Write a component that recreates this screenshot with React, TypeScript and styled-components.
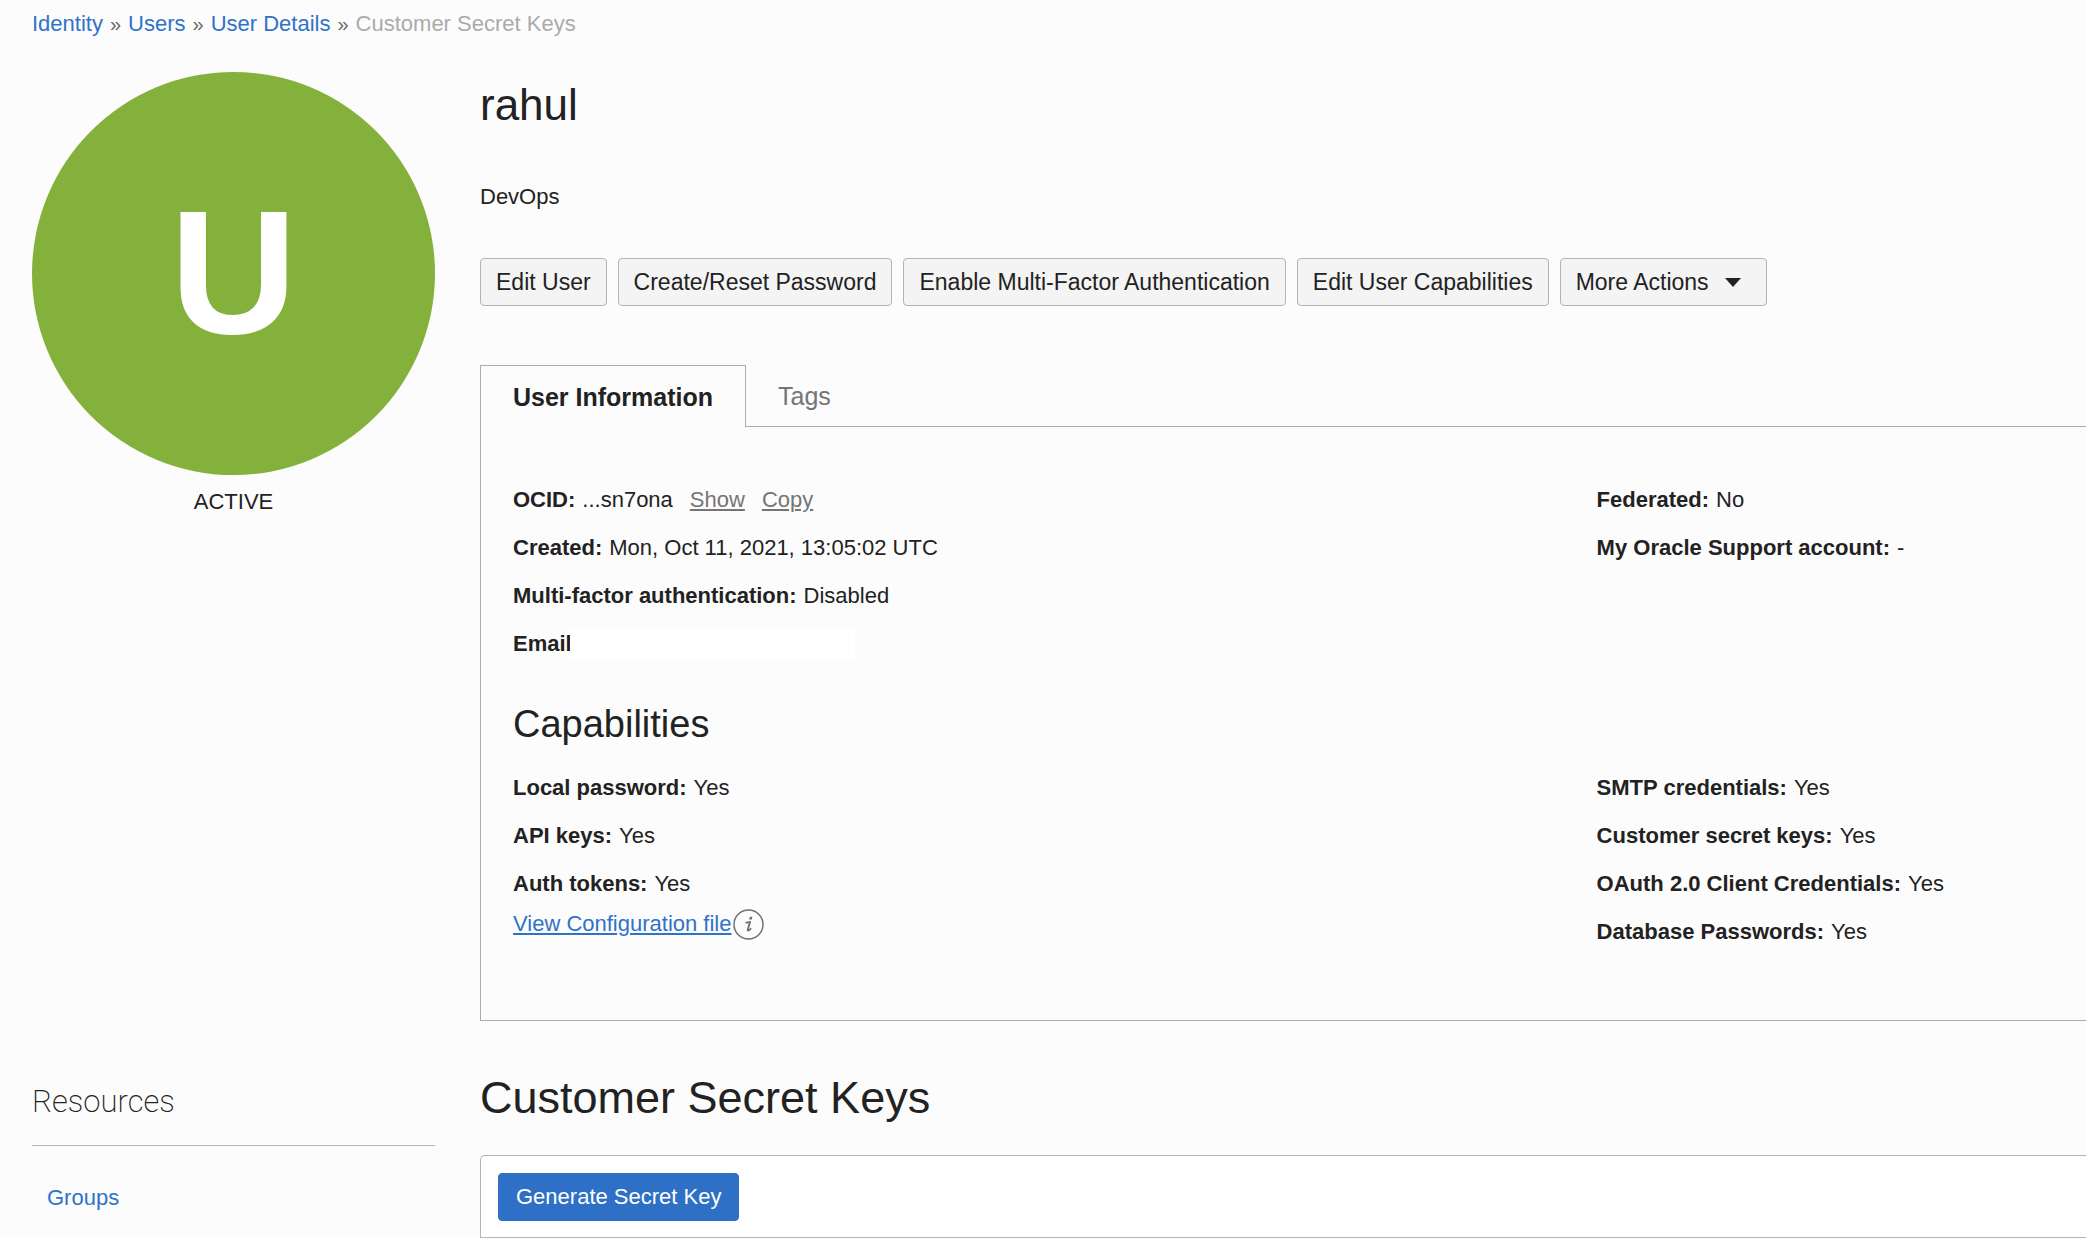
import React from 'react';
import styled, { createGlobalStyle } from 'styled-components';

const color = {
  page: '#fcfcfc',
  text: '#222222',
  muted: '#757575',
  faint: '#ababab',
  link: '#2f73c9',
  primary: '#2e70c6',
  avatar: '#84b03c',
  line: '#aaacae',
  controlLine: '#b1b4bb',
};

const GlobalStyle = createGlobalStyle`
  *, *::before, *::after { box-sizing: border-box; }
  body {
    margin: 0;
    background: ${color.page};
    color: ${color.text};
    font: 22px/32px "Liberation Sans", Arial, sans-serif;
  }
  h1, h2, h3, p, ul, ol, dl, dd { margin: 0; padding: 0; }
  h1, h2, h3 { font-weight: 400; }
  ul, ol { list-style: none; }
  button { font: inherit; cursor: pointer; }
`;

const Page = styled.div`
  padding-left: 32px;
`;

const Crumbs = styled.ol`
  display: flex;
  line-height: 48px;
  margin-bottom: 24px;

  li + li::before {
    content: '»';
    margin: 0 7px;
    font-size: 20px;
    color: #666666;
  }
`;

const Link = styled.a<{ $quiet?: boolean; $underlined?: boolean }>`
  color: ${(p) => (p.$quiet ? color.muted : color.link)};
  text-decoration: ${(p) => (p.$underlined ? 'underline' : 'none')};
  text-decoration-thickness: 2px;
  text-underline-offset: 2px;
`;

const CurrentCrumb = styled.span`
  color: ${color.faint};
`;

const Section = styled.div`
  display: grid;
  grid-template-columns: 403px minmax(0, 1fr);
  column-gap: 45px;
`;

const Status = styled.aside`
  text-align: center;
`;

const Avatar = styled.div`
  display: flex;
  align-items: center;
  justify-content: center;
  aspect-ratio: 1;
  margin-bottom: 11px;
  padding-bottom: 4px;
  border-radius: 50%;
  background: ${color.avatar};
  color: #ffffff;
  font-size: 176px;
  font-weight: 700;
  line-height: 1;
`;

const Title = styled.h1`
  font-size: 44px;
  line-height: 66px;
`;

const Description = styled.p`
  margin: 43px 0 45px;
`;

const Actions = styled.div`
  display: flex;
  flex-wrap: wrap;
  gap: 11px;
  margin-bottom: 59px;
  font-size: 23px;
`;

const Button = styled.button<{ $primary?: boolean }>`
  display: inline-flex;
  align-items: center;
  gap: 16px;
  height: 48px;
  padding: 0 ${(p) => (p.$primary ? 17 : 15)}px;
  border: 1px solid ${(p) => (p.$primary ? color.primary : color.controlLine)};
  border-radius: 4px;
  background: ${(p) => (p.$primary ? color.primary : '#f4f4f4')};
  color: ${(p) => (p.$primary ? '#ffffff' : color.text)};
`;

const Caret = styled.svg`
  width: 16px;
  height: 9px;
  margin-right: 10px;
  fill: currentColor;
`;

const Tabs = styled.div`
  display: flex;
  height: 62px;

  &::after {
    content: '';
    flex: 1;
    border-bottom: 1px solid ${color.line};
  }
`;

const Tab = styled.button<{ $active?: boolean }>`
  padding: 0 32px;
  border: solid ${color.line};
  border-width: ${(p) => (p.$active ? '1px 1px 0' : '0 0 1px')};
  background: none;
  color: ${(p) => (p.$active ? color.text : color.muted)};
  font-size: 25px;
  font-weight: ${(p) => (p.$active ? 700 : 400)};
`;

const Panel = styled.section`
  padding: 49px 0 64px 32px;
  border: solid ${color.line};
  border-width: 0 0 1px 1px;
`;

const Columns = styled.div`
  display: grid;
  grid-template-columns: 31fr 14fr;
`;

const Fact = styled.div`
  display: flex;
  align-items: center;
  gap: 7px;
  line-height: 48px;

  dt { font-weight: 700; }
  dd { display: flex; gap: 17px; }
`;

const Redaction = styled.dd`
  width: 285px;
  height: 29px;
  margin-left: -9px;
  background: #ffffff;
`;

const PanelHeading = styled.h2`
  margin: 32px 0 16px;
  font-size: 38px;
  line-height: 48px;
`;

const ConfigRow = styled.div`
  display: flex;
  align-items: center;
  gap: 1px;
`;

const InfoIcon = styled.svg`
  width: 31px;
  height: 31px;
`;

const ResourcesHeading = styled.h3`
  margin-top: 57px;
  padding-bottom: 19px;
  border-bottom: 1px solid ${color.controlLine};
  font-family: Roboto, "Liberation Sans", sans-serif;
  font-size: 31px;
  font-weight: 200;
  line-height: 48px;
`;

const ResourceList = styled.ul`
  padding: 36px 15px 0;
`;

const KeysHeading = styled.h2`
  margin: 45px 0 25px;
  font-size: 45px;
  line-height: 64px;
`;

const KeysCard = styled.div`
  border: solid ${color.controlLine};
  border-width: 1px 0 0 1px;
  border-radius: 5px 0 0 0;
  background: #ffffff;
`;

const Toolbar = styled.div`
  display: flex;
  padding: 17px 17px 16px;
  border-bottom: 1px solid ${color.controlLine};
`;

type FactItem = [label: string, value: React.ReactNode];

const identityFacts: FactItem[] = [
  ['Created:', 'Mon, Oct 11, 2021, 13:05:02 UTC'],
  ['Multi-factor authentication:', 'Disabled'],
];

const accountFacts: FactItem[] = [
  ['Federated:', 'No'],
  ['My Oracle Support account:', '-'],
];

const leftCapabilities: FactItem[] = [
  ['Local password:', 'Yes'],
  ['API keys:', 'Yes'],
  ['Auth tokens:', 'Yes'],
];

const rightCapabilities: FactItem[] = [
  ['SMTP credentials:', 'Yes'],
  ['Customer secret keys:', 'Yes'],
  ['OAuth 2.0 Client Credentials:', 'Yes'],
  ['Database Passwords:', 'Yes'],
];

function Facts({ items }: { items: FactItem[] }) {
  return (
    <>
      {items.map(([label, value]) => (
        <Fact key={label}>
          <dt>{label}</dt>
          <dd>{value}</dd>
        </Fact>
      ))}
    </>
  );
}

export default function App() {
  return (
    <>
      <GlobalStyle />
      <Page>
        <nav aria-label="Breadcrumb">
          <Crumbs>
            <li><Link href="#identity">Identity</Link></li>
            <li><Link href="#users">Users</Link></li>
            <li><Link href="#details">User Details</Link></li>
            <li><CurrentCrumb aria-current="page">Customer Secret Keys</CurrentCrumb></li>
          </Crumbs>
        </nav>

        <Section>
          <Status>
            <Avatar>U</Avatar>
            <p>ACTIVE</p>
          </Status>
          <main>
            <Title>rahul</Title>
            <Description>DevOps</Description>
            <Actions>
              <Button>Edit User</Button>
              <Button>Create/Reset Password</Button>
              <Button>Enable Multi-Factor Authentication</Button>
              <Button>Edit User Capabilities</Button>
              <Button aria-haspopup="menu">
                More Actions
                <Caret viewBox="0 0 16 9" aria-hidden="true">
                  <path d="M0 0h16L8 9z" />
                </Caret>
              </Button>
            </Actions>

            <Tabs role="tablist">
              <Tab role="tab" aria-selected="true" $active>User Information</Tab>
              <Tab role="tab" aria-selected="false">Tags</Tab>
            </Tabs>
            <Panel role="tabpanel">
              <Columns>
                <dl>
                  <Fact>
                    <dt>OCID:</dt>
                    <dd>
                      ...sn7ona
                      <Link href="#show" $quiet $underlined>Show</Link>
                      <Link href="#copy" $quiet $underlined>Copy</Link>
                    </dd>
                  </Fact>
                  <Facts items={identityFacts} />
                  <Fact>
                    <dt>Email</dt>
                    <Redaction />
                  </Fact>
                </dl>
                <dl><Facts items={accountFacts} /></dl>
              </Columns>

              <PanelHeading>Capabilities</PanelHeading>
              <Columns>
                <div>
                  <dl><Facts items={leftCapabilities} /></dl>
                  <ConfigRow>
                    <Link href="#config" $underlined>View Configuration file</Link>
                    <InfoIcon viewBox="0 0 31 31" fill="none" aria-hidden="true">
                      <circle cx="15.500" cy="15.500" r="14.500" stroke="#707070" strokeWidth="1.500" />
                      <path d="M16.800 7.800h2.600l-.6 2.600h-2.600z" fill="#707070" />
                      <path
                        d="M13.200 13.700c1.500-.2 2.500-.4 3.900-.8l-2.300 7.600c-.4 1.500.7 1.500 2.900-.6"
                        stroke="#707070"
                        strokeWidth="1.800"
                        strokeLinecap="round"
                        strokeLinejoin="round"
                      />
                    </InfoIcon>
                  </ConfigRow>
                </div>
                <dl><Facts items={rightCapabilities} /></dl>
              </Columns>
            </Panel>
          </main>
        </Section>

        <Section>
          <nav aria-label="Resources">
            <ResourcesHeading>Resources</ResourcesHeading>
            <ResourceList>
              <li><Link href="#groups">Groups</Link></li>
            </ResourceList>
          </nav>
          <section>
            <KeysHeading>Customer Secret Keys</KeysHeading>
            <KeysCard>
              <Toolbar>
                <Button $primary>Generate Secret Key</Button>
              </Toolbar>
            </KeysCard>
          </section>
        </Section>
      </Page>
    </>
  );
}
